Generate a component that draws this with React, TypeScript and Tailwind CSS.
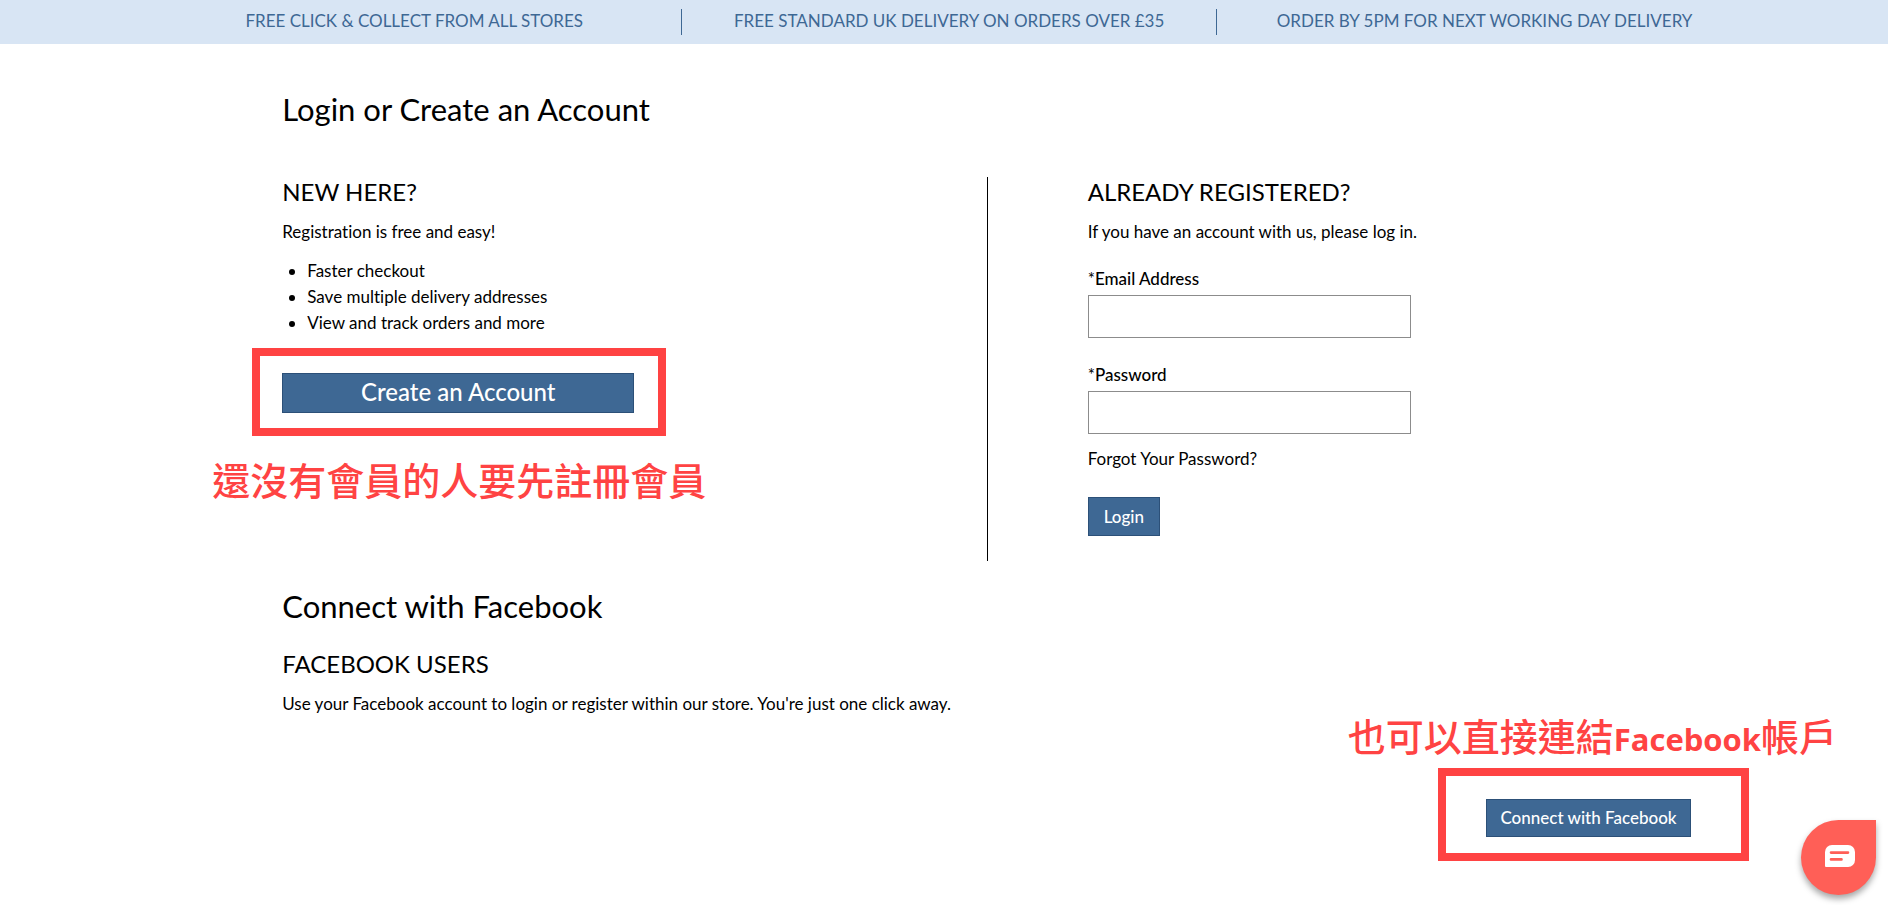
import React from "react";

const promos = [
  "FREE CLICK & COLLECT FROM ALL STORES",
  "FREE STANDARD UK DELIVERY ON ORDERS OVER £35",
  "ORDER BY 5PM FOR NEXT WORKING DAY DELIVERY",
];

const benefits = [
  "Faster checkout",
  "Save multiple delivery addresses",
  "View and track orders and more",
];

const PromoBar = () => (
  <div className="h-11 bg-[#d8e5f4] pt-[9px] pr-[7.2%] pl-[7.8%]">
    <ul className="grid grid-cols-3 text-center text-[17px] text-[#3e6894]">
      {promos.map((promo) => (
        <li
          key={promo}
          className="h-[26px] border-r border-[#3e6894] leading-6 whitespace-nowrap last:border-r-0"
        >
          {promo}
        </li>
      ))}
    </ul>
  </div>
);

const Field = ({
  id,
  label,
  type,
}: {
  id: string;
  label: string;
  type: string;
}) => (
  <div className="flex flex-col">
    <label htmlFor={id} className="mb-1 leading-6 font-medium">
      <span className="font-normal">*</span>
      {label}
    </label>
    <input
      id={id}
      type={type}
      className="h-[43px] w-full border border-[#8c8c8c] px-3 outline-none"
    />
  </div>
);

const ChatButton = () => (
  <button
    type="button"
    aria-label="Chat"
    className="fixed right-3 bottom-[10px] flex size-[75px] items-center justify-center rounded-full rounded-tr-lg bg-[#ff5f57] pb-1 pl-[2px] shadow-[0_4px_6px_rgba(0,0,0,0.35)]"
  >
    <svg width="30" height="22" viewBox="0 0 30 22" fill="none">
      <path
        d="M7 0h16a7 7 0 0 1 7 7v8a7 7 0 0 1-7 7H1a1 1 0 0 1-1-1V7a7 7 0 0 1 7-7z"
        fill="#fff"
      />
      <path
        d="M6 7.6h17M6 14.4h10.5"
        stroke="#ff5f57"
        strokeWidth="2.6"
        strokeLinecap="round"
      />
    </svg>
  </button>
);

export default function App() {
  return (
    <div className="min-h-screen bg-white font-[Lato,'Noto_Sans_CJK_TC',sans-serif] text-[17px] leading-[26px] text-black [font-variant-ligatures:none]">
      <PromoBar />

      <main className="pt-11">
        <div className="mx-auto w-[70.1%]">
          <h1 className="text-[31px] leading-[42px]">
            Login or Create an Account
          </h1>

          <div className="mt-[47px] flex h-[384px]">
            <section className="w-[53.3%] border-r border-black">
              <h2 className="text-[24px] leading-[30px]">NEW HERE?</h2>
              <p className="mt-3">Registration is free and easy!</p>
              <ul className="mt-[13px] list-disc pl-[25px]">
                {benefits.map((benefit) => (
                  <li key={benefit}>{benefit}</li>
                ))}
              </ul>

              <div className="relative mt-[37px] w-[352px]">
                <button
                  type="button"
                  className="h-10 w-full border border-[#2c5078] bg-[#3e6894] pb-[2px] text-[24px] leading-[30px] font-medium text-white"
                >
                  Create an Account
                </button>
                {/* Callout */}
                <div className="pointer-events-none absolute -top-[25px] -right-8 -bottom-[23px] -left-[30px] border-8 border-[#ff4343]" />
                <p className="absolute top-[81px] -left-[70px] text-[38px] leading-[52px] font-medium whitespace-nowrap text-[#ff4343]">
                  還沒有會員的人要先註冊會員
                </p>
              </div>
            </section>

            <section className="pl-[100px]">
              <h2 className="text-[24px] leading-[30px]">
                ALREADY REGISTERED?
              </h2>
              <p className="mt-3">
                If you have an account with us, please log in.
              </p>
              <form
                className="mt-[22px] w-[323px]"
                onSubmit={(e) => e.preventDefault()}
              >
                <div className="flex flex-col gap-[25px]">
                  <Field id="email" label="Email Address" type="email" />
                  <Field id="password" label="Password" type="password" />
                </div>
                <a href="#forgot" className="mt-3 block">
                  Forgot Your Password?
                </a>
                <button
                  type="submit"
                  className="mt-[25px] h-[39px] border border-[#2c5078] bg-[#3e6894] px-[15px] font-medium text-white"
                >
                  Login
                </button>
              </form>
            </section>
          </div>

          <section className="mt-6">
            <h2 className="text-[31px] leading-[42px]">
              Connect with Facebook
            </h2>
            <h3 className="mt-[22px] text-[24px] leading-[30px]">
              FACEBOOK USERS
            </h3>
            <p className="mt-3">
              Use your Facebook account to login or register within our store.
              You're just one click away.
            </p>
          </section>
        </div>

        <div className="mt-[82px] flex justify-end pr-[197px]">
          <div className="relative">
            <button
              type="button"
              className="h-[38px] w-[205px] border border-[#2c5078] bg-[#3e6894] font-medium text-white"
            >
              Connect with Facebook
            </button>
            {/* Callout */}
            <div className="pointer-events-none absolute -top-[31px] -right-[58px] -bottom-6 -left-12 border-8 border-[#ff4343]" />
            <p className="absolute -top-[89px] -right-[146px] text-[38px] leading-[52px] font-medium whitespace-nowrap text-[#ff4343]">
              也可以直接連結
              <span className="font-['Open_Sans'] text-[31px] font-bold">
                Facebook
              </span>
              帳戶
            </p>
          </div>
        </div>
      </main>

      <ChatButton />
    </div>
  );
}
